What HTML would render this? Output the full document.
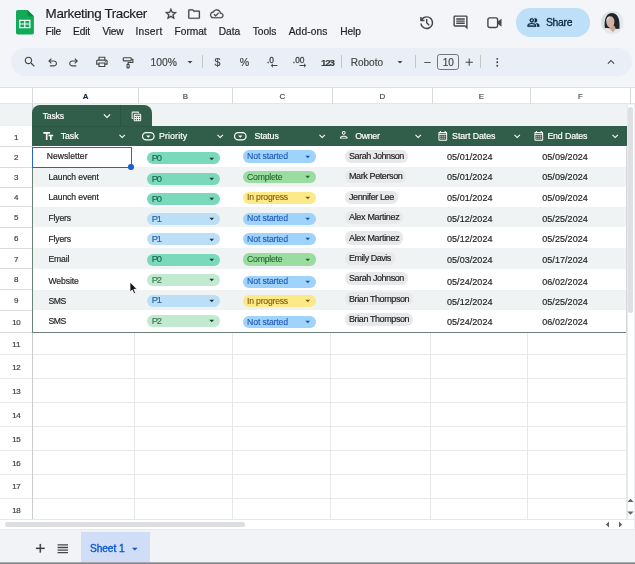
<!DOCTYPE html>
<html lang="en"><head><meta charset="utf-8"><title>Marketing Tracker</title>
<style>
html,body{margin:0;padding:0;}
body{width:635px;height:564px;position:relative;overflow:hidden;background:#f3f5f9;font-family:"Liberation Sans", sans-serif;-webkit-font-smoothing:antialiased;}
#w{position:absolute;left:0;top:0;width:635px;height:564px;transform:translateZ(0);will-change:transform;}
.b{position:absolute;}
.i{position:absolute;overflow:visible;}
.t{position:absolute;height:20px;line-height:20px;white-space:nowrap;-webkit-text-stroke:.18px currentColor;}
.chip{height:12.400px;line-height:12.400px;font-size:8.400px;color:#1f1f1f;background:#e3e5e7;border-radius:5px;padding:0 3.200px;}
</style></head><body><div id="w">
<div class="b" style="left:0px;top:0px;width:635px;height:564px;background:#f3f5f9;"></div>
<svg class="i" style="left:16.100px;top:10.100px;width:17.900px;height:24.500px" viewBox="0 0 17.9 24.5"><path d="M1.800 0h9.700L17.900 6.200V22.700a1.800 1.800 0 0 1-1.800 1.800H1.800A1.800 1.800 0 0 1 0 22.700V1.800A1.800 1.800 0 0 1 1.800 0z" fill="#12a957"/><path d="M11.500 0L17.900 6.200h-4.600a1.800 1.800 0 0 1-1.800-1.800z" fill="#0a8a40"/><path d="M3.100 9.800h11.400v8.500H3.100zM4.300 11v2.400h3.900V11zm5.100 0v2.400h3.900V11zM4.300 14.600v2.500h3.900v-2.500zm5.100 0v2.500h3.900v-2.500z" fill="#fff" fill-rule="evenodd"/></svg>
<span class="t" style="left:45.6px;top:4.10px;font-size:13.4px;color:#1f1f1f;font-weight:400;letter-spacing:-0.345px;">Marketing Tracker</span>
<svg class="i" style="left:164.40px;top:7.40px;width:13.8px;height:13.8px" viewBox="0 0 24 24" fill="#3c3f3e" stroke="#3c3f3e" stroke-width=".7"><path d="M22 9.24l-7.19-.62L12 2 9.19 8.63 2 9.24l5.46 4.73L5.82 21 12 17.27 18.18 21l-1.63-7.03L22 9.24zM12 15.4l-3.76 2.27 1-4.28-3.32-2.88 4.38-.38L12 6.1l1.71 4.04 4.38.38-3.32 2.88 1 4.28L12 15.4z"/></svg>
<svg class="i" style="left:186.90px;top:7.10px;width:14.2px;height:14.2px" viewBox="0 0 24 24" fill="#444746" stroke="#444746" stroke-width=".3"><path d="M9.17 6l2 2H20v10H4V6h5.17M10 4H4c-1.1 0-1.99.9-1.99 2L2 18c0 1.1.9 2 2 2h16c1.1 0 2-.9 2-2V8c0-1.1-.9-2-2-2h-8l-2-2z"/></svg>
<svg class="i" style="left:209.60px;top:7.20px;width:13.6px;height:13.6px" viewBox="0 0 24 24" fill="#444746" stroke="#444746" stroke-width=".3"><path d="M19.35 10.04C18.67 6.59 15.64 4 12 4 9.11 4 6.6 5.64 5.35 8.04 2.34 8.36 0 10.91 0 14c0 3.31 2.69 6 6 6h13c2.76 0 5-2.24 5-5 0-2.64-2.05-4.78-4.65-4.96zM19 18H6c-2.21 0-4-1.79-4-4 0-2.05 1.53-3.76 3.56-3.97l1.07-.11.5-.95C8.08 7.14 9.94 6 12 6c2.62 0 4.88 1.86 5.39 4.43l.3 1.5 1.53.11c1.56.1 2.78 1.41 2.78 2.96 0 1.65-1.35 3-3 3zm-9-3.820l-2.090-2.090L6.500 13.500 10 17l6.010-6.010-1.410-1.410z"/></svg>
<span class="t" style="left:45.6px;top:21.60px;font-size:10.2px;color:#1f1f1f;font-weight:400;letter-spacing:-0.255px;">File</span>
<span class="t" style="left:73px;top:21.60px;font-size:10.2px;color:#1f1f1f;font-weight:400;letter-spacing:-0.141px;">Edit</span>
<span class="t" style="left:102.5px;top:21.60px;font-size:10.2px;color:#1f1f1f;font-weight:400;letter-spacing:-0.252px;">View</span>
<span class="t" style="left:135.5px;top:21.60px;font-size:10.2px;color:#1f1f1f;font-weight:400;letter-spacing:0.253px;">Insert</span>
<span class="t" style="left:174.6px;top:21.60px;font-size:10.2px;color:#1f1f1f;font-weight:400;letter-spacing:-0.044px;">Format</span>
<span class="t" style="left:218.7px;top:21.60px;font-size:10.2px;color:#1f1f1f;font-weight:400;letter-spacing:-0.033px;">Data</span>
<span class="t" style="left:252.7px;top:21.60px;font-size:10.2px;color:#1f1f1f;font-weight:400;letter-spacing:-0.016px;">Tools</span>
<span class="t" style="left:288.7px;top:21.60px;font-size:10.2px;color:#1f1f1f;font-weight:400;letter-spacing:0.135px;">Add-ons</span>
<span class="t" style="left:340.2px;top:21.60px;font-size:10.2px;color:#1f1f1f;font-weight:400;letter-spacing:-0.088px;">Help</span>
<svg class="i" style="left:417.50px;top:13.90px;width:17.4px;height:17.4px" viewBox="0 -960 960 960" fill="#444746" ><path d="M480-120q-138 0-240.500-91.500T122-440h82q14 104 92.500 172T480-200q117 0 198.500-81.500T760-480q0-117-81.500-198.500T480-760q-69 0-129 32t-101 88h110v80H120v-240h80v94q51-64 124.500-99T480-840q75 0 140.500 28.500t114 77q48.500 48.500 77 114T840-480q0 75-28.500 140.500t-77 114q-48.500 48.500-114 77T480-120Zm112-192L440-464v-216h80v184l128 128-56 56Z"/></svg>
<svg class="i" style="left:451.70px;top:13.60px;width:17px;height:17px" viewBox="0 0 24 24" fill="#444746" ><path d="M21.990 4c0-1.100-.890-2-1.990-2H4c-1.100 0-2 .900-2 2v12c0 1.100.900 2 2 2h14l4 4-.010-18zM20 4v13.170L18.830 16H4V4h16zM6 12h12v2H6zm0-3h12v2H6zm0-3h12v2H6z"/></svg>
<svg class="i" style="left:486.800px;top:16.800px;width:15px;height:11.400px" viewBox="0 0 15 11.4"><rect x=".9" y=".9" width="9.700" height="9.600" rx="1.800" fill="none" stroke="#444746" stroke-width="1.400"/><path d="M10.800 4.600L14.500 1.700v8L10.800 6.800z" fill="#444746"/></svg>
<div class="b" style="left:516px;top:8.3px;width:73.6px;height:28.3px;background:#bde0f8;border-radius:14.150px;"></div>
<svg class="i" style="left:527.10px;top:16.20px;width:12.8px;height:12.8px" viewBox="0 0 24 24" fill="#0a2540" stroke="#0a2540" stroke-width=".5"><path d="M16.670 13.130C18.040 14.060 19 15.320 19 17v3h4v-3c0-2.180-3.570-3.470-6.330-3.870zM15 12c2.210 0 4-1.790 4-4s-1.790-4-4-4c-.47 0-.91.100-1.330.240C14.500 5.270 15 6.580 15 8s-.5 2.730-1.330 3.760c.42.140.86.240 1.330.240zM9 12c2.210 0 4-1.790 4-4S11.210 4 9 4 5 5.790 5 8s1.790 4 4 4zm0-6c1.100 0 2 .9 2 2s-.9 2-2 2-2-.9-2-2 .9-2 2-2zm0 7c-2.670 0-8 1.340-8 4v3h16v-3c0-2.660-5.330-4-8-4zm6 5H3v-.990C3.200 16.290 6.300 15 9 15s5.800 1.290 6 2v1z"/></svg>
<span class="t" style="left:546px;top:12.60px;font-size:10.4px;color:#0a2540;font-weight:400;letter-spacing:-0.307px;-webkit-text-stroke:.3px #0a2540;">Share</span>
<svg class="i" style="left:600.800px;top:11.200px;width:22.800px;height:22.800px" viewBox="0 0 40 40"><defs><clipPath id="av"><circle cx="20" cy="20" r="20"/></clipPath><linearGradient id="avg" x1="0" x2="1" y1="0" y2="0"><stop offset="0" stop-color="#cfe1db"/><stop offset=".55" stop-color="#dfe7ea"/><stop offset="1" stop-color="#e6ebf2"/></linearGradient></defs><g clip-path="url(#av)"><rect width="40" height="40" fill="url(#avg)"/><path d="M2 40C4 32 10 30 16 29.500L22 37 28 29.500C34 31 38 34 39 40z" fill="#e6e7e9"/><path d="M6.800 30C5 15 9 4 18.500 3.500 29 4 33.500 12 32.500 31L24 31.500 11 30z" fill="#1f2428"/><path d="M15 26h8.500l2.500 5-5 6.500-6-7z" fill="#c9a597"/><path d="M9.200 18C9 12 12 9 16 9 20.500 9 23.500 12.500 23.500 18.500 23.500 24 21 29 16.500 29 12.500 29 9.400 24 9.200 18z" fill="#d3b1a3"/><path d="M10 15c.5-3 2.800-5 5.500-5.200 .5 2.500-1.500 6-5.500 7.500z" fill="#e2d6d1"/></g></svg>
<div class="b" style="left:10.5px;top:47.9px;width:621px;height:27.8px;background:#e9eef7;border-radius:13.900px;"></div>
<svg class="i" style="left:23.10px;top:55.10px;width:13.8px;height:13.8px" viewBox="0 0 24 24" fill="#444746" ><path d="M15.5 14h-.79l-.28-.27C15.41 12.59 16 11.11 16 9.5 16 5.91 13.09 3 9.5 3S3 5.91 3 9.5 5.91 16 9.5 16c1.61 0 3.09-.59 4.23-1.57l.27.28v.79l5 4.99L20.49 19l-4.99-5zm-6 0C7.01 14 5 11.99 5 9.5S7.01 5 9.5 5 14 7.01 14 9.5 11.99 14 9.5 14z"/></svg>
<svg class="i" style="left:46.20px;top:55.70px;width:13.2px;height:13.2px" viewBox="0 0 24 24" fill="#444746" ><path d="M7 19v-2h7.1q1.575 0 2.737-1Q18 15 18 13.5T16.837 11Q15.675 10 14.1 10H7.8l2.6 2.6L9 14 4 9l5-5 1.4 1.4L7.8 8h6.3q2.425 0 4.163 1.575Q20 11.150 20 13.5q0 2.350-1.737 3.925Q16.525 19 14.100 19Z"/></svg>
<svg class="i" style="left:67.40px;top:55.70px;width:13.2px;height:13.2px" viewBox="0 0 24 24" fill="#444746" ><path d="M9.9 19q-2.425 0-4.162-1.575Q4 15.850 4 13.500q0-2.350 1.738-3.925Q7.475 8 9.900 8h6.300l-2.600-2.600L15 4l5 5-5 5-1.400-1.400 2.600-2.600H9.900q-1.575 0-2.737 1Q6 12 6 13.500T7.163 16q1.162 1 2.737 1H17v2Z"/></svg>
<svg class="i" style="left:94.60px;top:55.10px;width:13.8px;height:13.8px" viewBox="0 0 24 24" fill="#444746" ><path d="M19 8h-1V3H6v5H5c-1.66 0-3 1.34-3 3v6h4v4h12v-4h4v-6c0-1.66-1.34-3-3-3zM8 5h8v3H8V5zm8 12v2H8v-4h8v2zm2-2v-2H6v2H4v-4c0-.55.45-1 1-1h14c.55 0 1 .45 1 1v4h-2z"/><circle cx="18" cy="11.5" r="1"/></svg>
<svg class="i" style="left:120.80px;top:55.60px;width:13.6px;height:13.6px" viewBox="0 0 24 24" fill="#444746" ><g fill="none" stroke="#444746" stroke-width="2" stroke-linejoin="round"><rect x="4" y="3" width="14" height="5.500" rx="1.200"/><path d="M18 5.800h3v5.700h-8.500V14.500"/><rect x="10.700" y="14.800" width="3.600" height="6.200" rx=".8"/></g></svg>
<span class="t" style="left:150.4px;top:52.90px;font-size:10.3px;color:#444746;font-weight:400;letter-spacing:0.039px;">100%</span>
<svg class="i" style="left:183.70px;top:56.00px;width:12px;height:12px" viewBox="0 0 24 24" fill="#444746" ><path d="M7 10l5 5 5-5z"/></svg>
<div class="b" style="left:202px;top:55.4px;width:1px;height:13px;background:#c7c7c7;"></div>
<span class="t" style="left:117.4px;width:200px;text-align:center;top:52.20px;font-size:10.6px;color:#444746;font-weight:400;">$</span>
<span class="t" style="left:144.4px;width:200px;text-align:center;top:52.20px;font-size:10.6px;color:#444746;font-weight:400;">%</span>
<span class="t" style="left:170.5px;width:200px;text-align:center;top:49.80px;font-size:8.4px;color:#444746;font-weight:400;-webkit-text-stroke:.3px #444746;">.0</span>
<svg class="i" style="left:270px;top:63px;width:8px;height:5px" viewBox="0 0 8 5"><path d="M7.500 2.500H1.500M3 .8L1.200 2.500 3 4.200" stroke="#444746" stroke-width="1" fill="none"/></svg>
<span class="t" style="left:198.7px;width:200px;text-align:center;top:49.80px;font-size:8.4px;color:#444746;font-weight:400;-webkit-text-stroke:.3px #444746;">.00</span>
<svg class="i" style="left:299px;top:63px;width:8px;height:5px" viewBox="0 0 8 5"><path d="M.5 2.500H6.500M5 .8L6.800 2.500 5 4.200" stroke="#444746" stroke-width="1" fill="none"/></svg>
<span class="t" style="left:321.0px;top:52.60px;font-size:9.8px;color:#3c3f3e;font-weight:700;letter-spacing:-1.186px;">123</span>
<div class="b" style="left:341px;top:55.4px;width:1px;height:13px;background:#c7c7c7;"></div>
<span class="t" style="left:350.7px;top:52.90px;font-size:10.0px;color:#444746;font-weight:400;letter-spacing:0.008px;">Roboto</span>
<svg class="i" style="left:394.00px;top:56.00px;width:12px;height:12px" viewBox="0 0 24 24" fill="#444746" ><path d="M7 10l5 5 5-5z"/></svg>
<div class="b" style="left:415px;top:55.4px;width:1px;height:13px;background:#c7c7c7;"></div>
<svg class="i" style="left:421.50px;top:56.50px;width:11px;height:11px" viewBox="0 0 24 24" fill="#444746" ><path d="M5 11h14v2H5z"/></svg>
<div class="b" style="left:437.1px;top:53.7px;width:22.2px;height:16.3px;border:1px solid #747775;border-radius:2.800px;box-sizing:border-box;"></div>
<span class="t" style="left:348.2px;width:200px;text-align:center;top:52.80px;font-size:10.0px;color:#444746;font-weight:400;">10</span>
<svg class="i" style="left:463.20px;top:55.80px;width:12.4px;height:12.4px" viewBox="0 0 24 24" fill="#444746" ><path d="M19 13h-6v6h-2v-6H5v-2h6V5h2v6h6v2z"/></svg>
<div class="b" style="left:480.2px;top:55.4px;width:1px;height:13px;background:#c7c7c7;"></div>
<svg class="i" style="left:491.35px;top:55.75px;width:12.5px;height:12.5px" viewBox="0 0 24 24" fill="#444746" ><circle cx="12" cy="5.5" r="1.9"/><circle cx="12" cy="12" r="1.9"/><circle cx="12" cy="18.500" r="1.9"/></svg>
<svg class="i" style="left:604.00px;top:54.50px;width:14px;height:14px" viewBox="0 0 24 24" fill="#444746" ><path d="M12 8l-6 6 1.410 1.410L12 10.830l4.590 4.580L18 14z"/></svg>
<div class="b" style="left:0px;top:86.5px;width:635px;height:17.5px;background:#fff;border-top:1px solid #dee0e4;border-bottom:1px solid #e3e5ea;box-sizing:border-box;"></div>
<div class="b" style="left:32.3px;top:87.5px;width:1px;height:16px;background:#d7d9de;"></div>
<div class="b" style="left:138.2px;top:87.5px;width:1px;height:16px;background:#d7d9de;"></div>
<div class="b" style="left:232.0px;top:87.5px;width:1px;height:16px;background:#d7d9de;"></div>
<div class="b" style="left:332.2px;top:87.5px;width:1px;height:16px;background:#d7d9de;"></div>
<div class="b" style="left:432.0px;top:87.5px;width:1px;height:16px;background:#d7d9de;"></div>
<div class="b" style="left:530.3px;top:87.5px;width:1px;height:16px;background:#d7d9de;"></div>
<div class="b" style="left:629.8px;top:87.5px;width:1px;height:16px;background:#d7d9de;"></div>
<span class="t" style="left:-14.5px;width:200px;text-align:center;top:86.70px;font-size:7.9px;color:#1c2742;font-weight:700;">A</span>
<span class="t" style="left:85.4px;width:200px;text-align:center;top:86.70px;font-size:7.9px;color:#444746;font-weight:400;">B</span>
<span class="t" style="left:182.3px;width:200px;text-align:center;top:86.70px;font-size:7.9px;color:#444746;font-weight:400;">C</span>
<span class="t" style="left:282.4px;width:200px;text-align:center;top:86.70px;font-size:7.9px;color:#444746;font-weight:400;">D</span>
<span class="t" style="left:381.4px;width:200px;text-align:center;top:86.70px;font-size:7.9px;color:#444746;font-weight:400;">E</span>
<span class="t" style="left:480.4px;width:200px;text-align:center;top:86.70px;font-size:7.9px;color:#444746;font-weight:400;">F</span>
<div class="b" style="left:0px;top:104px;width:635px;height:22px;background:#f0f3f4;"></div>
<div class="b" style="left:0px;top:126px;width:627px;height:396px;background:#fff;"></div>
<div class="b" style="left:627px;top:104.5px;width:8px;height:425px;background:#fff;border-left:1px solid #e6e8eb;border-right:1px solid #eceef1;box-sizing:border-box;"></div>
<div class="b" style="left:628.1px;top:106.8px;width:5px;height:206.5px;background:#dfe0e3;border-radius:2.500px;"></div>
<div class="b" style="left:33px;top:167px;width:594px;height:20px;background:#eff3f4;"></div>
<div class="b" style="left:33px;top:206.7px;width:594px;height:20.30000000000001px;background:#eff3f4;"></div>
<div class="b" style="left:33px;top:248px;width:594px;height:20.600000000000023px;background:#eff3f4;"></div>
<div class="b" style="left:33px;top:289.7px;width:594px;height:20.30000000000001px;background:#eff3f4;"></div>
<div class="b" style="left:0px;top:353.9px;width:627px;height:1px;background:#e6e8eb;"></div>
<div class="b" style="left:0px;top:377.7px;width:627px;height:1px;background:#e6e8eb;"></div>
<div class="b" style="left:0px;top:401.7px;width:627px;height:1px;background:#e6e8eb;"></div>
<div class="b" style="left:0px;top:425.8px;width:627px;height:1px;background:#e6e8eb;"></div>
<div class="b" style="left:0px;top:449.7px;width:627px;height:1px;background:#e6e8eb;"></div>
<div class="b" style="left:0px;top:473.7px;width:627px;height:1px;background:#e6e8eb;"></div>
<div class="b" style="left:0px;top:497.5px;width:627px;height:1px;background:#e6e8eb;"></div>
<div class="b" style="left:0px;top:520.0px;width:627px;height:1px;background:#e6e8eb;"></div>
<div class="b" style="left:0px;top:146.2px;width:32px;height:1px;background:#d9dbde;"></div>
<div class="b" style="left:0px;top:166.5px;width:32px;height:1px;background:#d9dbde;"></div>
<div class="b" style="left:0px;top:186.5px;width:32px;height:1px;background:#d9dbde;"></div>
<div class="b" style="left:0px;top:206.2px;width:32px;height:1px;background:#d9dbde;"></div>
<div class="b" style="left:0px;top:226.5px;width:32px;height:1px;background:#d9dbde;"></div>
<div class="b" style="left:0px;top:247.5px;width:32px;height:1px;background:#d9dbde;"></div>
<div class="b" style="left:0px;top:268.1px;width:32px;height:1px;background:#d9dbde;"></div>
<div class="b" style="left:0px;top:289.2px;width:32px;height:1px;background:#d9dbde;"></div>
<div class="b" style="left:0px;top:309.5px;width:32px;height:1px;background:#d9dbde;"></div>
<div class="b" style="left:0px;top:331.9px;width:32px;height:1px;background:#d9dbde;"></div>
<div class="b" style="left:134.2px;top:333px;width:1px;height:188px;background:#e6e8eb;"></div>
<div class="b" style="left:231.6px;top:333px;width:1px;height:188px;background:#e6e8eb;"></div>
<div class="b" style="left:330px;top:333px;width:1px;height:188px;background:#e6e8eb;"></div>
<div class="b" style="left:429.8px;top:333px;width:1px;height:188px;background:#e6e8eb;"></div>
<div class="b" style="left:527px;top:333px;width:1px;height:188px;background:#e6e8eb;"></div>
<div class="b" style="left:626.4px;top:333px;width:1px;height:188px;background:#e6e8eb;"></div>
<div class="b" style="left:32.3px;top:104px;width:1px;height:418px;background:#c9ccd0;"></div>
<span class="t" style="left:-83.8px;width:200px;text-align:center;top:127.65px;font-size:8.0px;color:#3c4043;font-weight:400;">1</span>
<span class="t" style="left:-83.8px;width:200px;text-align:center;top:148.15px;font-size:8.0px;color:#3c4043;font-weight:400;">2</span>
<span class="t" style="left:-83.8px;width:200px;text-align:center;top:168.30px;font-size:8.0px;color:#3c4043;font-weight:400;">3</span>
<span class="t" style="left:-83.8px;width:200px;text-align:center;top:188.15px;font-size:8.0px;color:#3c4043;font-weight:400;">4</span>
<span class="t" style="left:-83.8px;width:200px;text-align:center;top:208.15px;font-size:8.0px;color:#3c4043;font-weight:400;">5</span>
<span class="t" style="left:-83.8px;width:200px;text-align:center;top:228.80px;font-size:8.0px;color:#3c4043;font-weight:400;">6</span>
<span class="t" style="left:-83.8px;width:200px;text-align:center;top:249.60px;font-size:8.0px;color:#3c4043;font-weight:400;">7</span>
<span class="t" style="left:-83.8px;width:200px;text-align:center;top:270.45px;font-size:8.0px;color:#3c4043;font-weight:400;">8</span>
<span class="t" style="left:-83.8px;width:200px;text-align:center;top:291.15px;font-size:8.0px;color:#3c4043;font-weight:400;">9</span>
<span class="t" style="left:-83.8px;width:200px;text-align:center;top:312.50px;font-size:8.0px;color:#3c4043;font-weight:400;letter-spacing:-0.503px;">10</span>
<span class="t" style="left:-83.8px;width:200px;text-align:center;top:334.70px;font-size:8.0px;color:#3c4043;font-weight:400;letter-spacing:-0.206px;">11</span>
<span class="t" style="left:-83.8px;width:200px;text-align:center;top:357.60px;font-size:8.0px;color:#3c4043;font-weight:400;letter-spacing:-0.503px;">12</span>
<span class="t" style="left:-83.8px;width:200px;text-align:center;top:381.50px;font-size:8.0px;color:#3c4043;font-weight:400;letter-spacing:-0.503px;">13</span>
<span class="t" style="left:-83.8px;width:200px;text-align:center;top:405.55px;font-size:8.0px;color:#3c4043;font-weight:400;letter-spacing:-0.503px;">14</span>
<span class="t" style="left:-83.8px;width:200px;text-align:center;top:429.55px;font-size:8.0px;color:#3c4043;font-weight:400;letter-spacing:-0.503px;">15</span>
<span class="t" style="left:-83.8px;width:200px;text-align:center;top:453.50px;font-size:8.0px;color:#3c4043;font-weight:400;letter-spacing:-0.503px;">16</span>
<span class="t" style="left:-83.8px;width:200px;text-align:center;top:477.40px;font-size:8.0px;color:#3c4043;font-weight:400;letter-spacing:-0.503px;">17</span>
<span class="t" style="left:-83.8px;width:200px;text-align:center;top:500.55px;font-size:8.0px;color:#3c4043;font-weight:400;letter-spacing:-0.503px;">18</span>
<div class="b" style="left:32.3px;top:104.6px;width:120px;height:22px;background:#315e4b;border-radius:8px 8px 0 0;"></div>
<div class="b" style="left:120px;top:104.6px;width:1px;height:21.4px;background:#2a5341;"></div>
<span class="t" style="left:42.7px;top:106.10px;font-size:8.6px;color:#fff;font-weight:400;letter-spacing:-0.174px;">Tasks</span>
<svg class="i" style="left:100.40px;top:108.80px;width:14px;height:14px" viewBox="0 0 24 24" fill="#fff" ><path d="M16.590 8.590L12 13.170 7.410 8.590 6 10l6 6 6-6z"/></svg>
<svg class="i" style="left:129.90px;top:109.50px;width:12.8px;height:12.8px" viewBox="0 0 24 24" fill="#e8f0ec" ><path d="M19 7H9c-1.100 0-2 .9-2 2v10c0 1.100.9 2 2 2h10c1.100 0 2-.9 2-2V9c0-1.100-.9-2-2-2zm0 2v2H9V9h10zm-6 6v-2h2v2h-2zm2 2v2h-2v-2h2zm-4-2H9v-2h2v2zm6-2h2v2h-2v-2zm-8 4h2v2H9v-2zm8 2v-2h2v2h-2zM6 17H5c-1.100 0-2-.9-2-2V5c0-1.100.9-2 2-2h10c1.100 0 2 .9 2 2v1h-2V5H5v10h1v2z"/></svg>
<div class="b" style="left:32.3px;top:125.7px;width:594.7px;height:20.3px;background:#315e4b;"></div>
<div class="b" style="left:32.3px;top:125.6px;width:120px;height:1px;background:#2c5644;"></div>
<svg class="i" style="left:42.25px;top:130.05px;width:12.5px;height:12.5px" viewBox="0 0 24 24" fill="#fff" color="#fff"><path d="M2.500 4v3h5v12h3V7h5V4h-13zm19 5h-9v3h3v7h3v-7h3V9z"/></svg>
<span class="t" style="left:60.7px;top:126.10px;font-size:8.8px;color:#fff;font-weight:400;letter-spacing:-0.073px;">Task</span>
<svg class="i" style="left:115.80px;top:129.50px;width:12.4px;height:12.4px" viewBox="0 0 24 24" fill="#fff" ><path d="M16.590 8.590L12 13.170 7.410 8.590 6 10l6 6 6-6z"/></svg>
<svg class="i" style="left:140.50px;top:128.80px;width:14.6px;height:14.6px" viewBox="0 0 24 24" fill="#fff" color="#fff"><rect x="2.5" y="6" width="19" height="12" rx="6" fill="none" stroke="currentColor" stroke-width="2"/><path d="M8.500 10.500l3.500 3.800 3.500-3.800z" fill="currentColor" stroke="none"/></svg>
<span class="t" style="left:159px;top:126.10px;font-size:8.8px;color:#fff;font-weight:400;letter-spacing:0.116px;">Priority</span>
<svg class="i" style="left:214.20px;top:129.50px;width:12.4px;height:12.4px" viewBox="0 0 24 24" fill="#fff" ><path d="M16.590 8.590L12 13.170 7.410 8.590 6 10l6 6 6-6z"/></svg>
<svg class="i" style="left:233.40px;top:128.80px;width:14.6px;height:14.6px" viewBox="0 0 24 24" fill="#fff" color="#fff"><rect x="2.5" y="6" width="19" height="12" rx="6" fill="none" stroke="currentColor" stroke-width="2"/><path d="M8.500 10.500l3.500 3.800 3.500-3.800z" fill="currentColor" stroke="none"/></svg>
<span class="t" style="left:254.4px;top:126.10px;font-size:8.8px;color:#fff;font-weight:400;letter-spacing:-0.109px;">Status</span>
<svg class="i" style="left:315.80px;top:129.50px;width:12.4px;height:12.4px" viewBox="0 0 24 24" fill="#fff" ><path d="M16.590 8.590L12 13.170 7.410 8.590 6 10l6 6 6-6z"/></svg>
<svg class="i" style="left:338.15px;top:129.45px;width:11.5px;height:11.5px" viewBox="0 0 24 24" fill="#fff" color="#fff"><path d="M12 6c1.100 0 2 .9 2 2s-.9 2-2 2-2-.9-2-2 .9-2 2-2m0 10c2.700 0 5.800 1.290 6 2H6c.23-.72 3.310-2 6-2m0-12C9.790 4 8 5.790 8 8s1.790 4 4 4 4-1.790 4-4-1.790-4-4-4zm0 10c-2.670 0-8 1.340-8 4v2h16v-2c0-2.660-5.330-4-8-4z"/></svg>
<span class="t" style="left:355.3px;top:126.10px;font-size:8.8px;color:#fff;font-weight:400;letter-spacing:-0.344px;">Owner</span>
<svg class="i" style="left:411.80px;top:129.50px;width:12.4px;height:12.4px" viewBox="0 0 24 24" fill="#fff" ><path d="M16.590 8.590L12 13.170 7.410 8.590 6 10l6 6 6-6z"/></svg>
<svg class="i" style="left:436.50px;top:129.80px;width:11.6px;height:11.6px" viewBox="0 0 24 24" fill="#fff" color="#fff"><path d="M19 4h-1V2h-2v2H8V2H6v2H5c-1.110 0-1.990.9-1.990 2L3 20c0 1.100.89 2 2 2h14c1.100 0 2-.9 2-2V6c0-1.100-.9-2-2-2zm0 16H5V10h14v10zM5 8V6h14v2H5zm4 6H7v-2h2v2zm4 0h-2v-2h2v2zm4 0h-2v-2h2v2zm-8 4H7v-2h2v2zm4 0h-2v-2h2v2zm4 0h-2v-2h2v2z"/></svg>
<span class="t" style="left:452.1px;top:126.10px;font-size:8.8px;color:#fff;font-weight:400;letter-spacing:-0.065px;">Start Dates</span>
<svg class="i" style="left:510.80px;top:129.50px;width:12.4px;height:12.4px" viewBox="0 0 24 24" fill="#fff" ><path d="M16.590 8.590L12 13.170 7.410 8.590 6 10l6 6 6-6z"/></svg>
<svg class="i" style="left:532.90px;top:129.80px;width:11.6px;height:11.6px" viewBox="0 0 24 24" fill="#fff" color="#fff"><path d="M19 4h-1V2h-2v2H8V2H6v2H5c-1.110 0-1.990.9-1.990 2L3 20c0 1.100.89 2 2 2h14c1.100 0 2-.9 2-2V6c0-1.100-.9-2-2-2zm0 16H5V10h14v10zM5 8V6h14v2H5zm4 6H7v-2h2v2zm4 0h-2v-2h2v2zm4 0h-2v-2h2v2zm-8 4H7v-2h2v2zm4 0h-2v-2h2v2zm4 0h-2v-2h2v2z"/></svg>
<span class="t" style="left:547.4px;top:126.10px;font-size:8.8px;color:#fff;font-weight:400;letter-spacing:-0.142px;">End Dates</span>
<svg class="i" style="left:609.30px;top:129.50px;width:12.4px;height:12.4px" viewBox="0 0 24 24" fill="#fff" ><path d="M16.590 8.590L12 13.170 7.410 8.590 6 10l6 6 6-6z"/></svg>
<div class="b" style="left:147.4px;top:152.2px;width:73px;height:12.0px;background:#7ad9bb;border-radius:6px;"></div>
<span class="t" style="left:151.7px;top:148.00px;font-size:9.3px;color:#1c6850;font-weight:400;letter-spacing:-1.188px;">P0</span>
<svg class="i" style="left:205.65px;top:152.55px;width:11.5px;height:11.5px" viewBox="0 0 24 24" fill="#1f3a30" ><path d="M7 10l5 5 5-5z"/></svg>
<div class="b" style="left:242.9px;top:150.4px;width:73px;height:12.2px;background:#a0d3fc;border-radius:6.100px;"></div>
<span class="t" style="left:247.1px;top:146.20px;font-size:8.7px;color:#1a55b0;font-weight:400;letter-spacing:-0.145px;-webkit-text-stroke:.08px currentColor;">Not started</span>
<svg class="i" style="left:301.55px;top:150.85px;width:11.5px;height:11.5px" viewBox="0 0 24 24" fill="#1a55b0" ><path d="M7 10l5 5 5-5z"/></svg>
<div class="b" style="left:345.2px;top:149.9px;width:62.699999999999996px;height:13.2px;background:#e8e9eb;border-radius:6px;"></div>
<span class="t" style="left:349.0px;top:146.20px;font-size:9.0px;color:#1f1f1f;font-weight:400;letter-spacing:-0.434px;">Sarah Johnson</span>
<span class="t" style="left:447.0px;top:146.60px;font-size:9.0px;color:#1f1f1f;font-weight:400;letter-spacing:0.045px;">05/01/2024</span>
<span class="t" style="left:542.2px;top:146.60px;font-size:9.0px;color:#1f1f1f;font-weight:400;letter-spacing:0.065px;">05/09/2024</span>
<span class="t" style="left:48.4px;top:167.40px;font-size:8.6px;color:#1f1f1f;font-weight:400;letter-spacing:-0.101px;">Launch event</span>
<div class="b" style="left:147.4px;top:172.7px;width:73px;height:12.0px;background:#7ad9bb;border-radius:6px;"></div>
<span class="t" style="left:151.7px;top:168.50px;font-size:9.3px;color:#1c6850;font-weight:400;letter-spacing:-1.188px;">P0</span>
<svg class="i" style="left:205.65px;top:173.05px;width:11.5px;height:11.5px" viewBox="0 0 24 24" fill="#1f3a30" ><path d="M7 10l5 5 5-5z"/></svg>
<div class="b" style="left:242.9px;top:170.70000000000002px;width:73px;height:12.2px;background:#9bdda0;border-radius:6.100px;"></div>
<span class="t" style="left:247.1px;top:166.50px;font-size:8.7px;color:#1f6429;font-weight:400;letter-spacing:-0.248px;-webkit-text-stroke:.08px currentColor;">Complete</span>
<svg class="i" style="left:301.55px;top:171.15px;width:11.5px;height:11.5px" viewBox="0 0 24 24" fill="#1f6429" ><path d="M7 10l5 5 5-5z"/></svg>
<div class="b" style="left:345.2px;top:170.10000000000002px;width:61.199999999999996px;height:13.2px;background:#e8e9eb;border-radius:6px;"></div>
<span class="t" style="left:349.0px;top:166.40px;font-size:9.0px;color:#1f1f1f;font-weight:400;letter-spacing:-0.395px;">Mark Peterson</span>
<span class="t" style="left:447.0px;top:167.40px;font-size:9.0px;color:#1f1f1f;font-weight:400;letter-spacing:0.045px;">05/01/2024</span>
<span class="t" style="left:542.2px;top:167.40px;font-size:9.0px;color:#1f1f1f;font-weight:400;letter-spacing:0.065px;">05/09/2024</span>
<span class="t" style="left:48.4px;top:187.10px;font-size:8.6px;color:#1f1f1f;font-weight:400;letter-spacing:-0.101px;">Launch event</span>
<div class="b" style="left:147.4px;top:193.0px;width:73px;height:12.0px;background:#7ad9bb;border-radius:6px;"></div>
<span class="t" style="left:151.7px;top:188.80px;font-size:9.3px;color:#1c6850;font-weight:400;letter-spacing:-1.188px;">P0</span>
<svg class="i" style="left:205.65px;top:193.35px;width:11.5px;height:11.5px" viewBox="0 0 24 24" fill="#1f3a30" ><path d="M7 10l5 5 5-5z"/></svg>
<div class="b" style="left:242.9px;top:191.5px;width:73px;height:12.2px;background:#fce98a;border-radius:6.100px;"></div>
<span class="t" style="left:247.1px;top:187.30px;font-size:8.7px;color:#835600;font-weight:400;letter-spacing:-0.234px;-webkit-text-stroke:.08px currentColor;">In progress</span>
<svg class="i" style="left:301.55px;top:191.95px;width:11.5px;height:11.5px" viewBox="0 0 24 24" fill="#835600" ><path d="M7 10l5 5 5-5z"/></svg>
<div class="b" style="left:345.2px;top:190.70000000000002px;width:52.599999999999994px;height:13.2px;background:#e8e9eb;border-radius:6px;"></div>
<span class="t" style="left:349.0px;top:187.00px;font-size:9.0px;color:#1f1f1f;font-weight:400;letter-spacing:-0.396px;">Jennifer Lee</span>
<span class="t" style="left:447.0px;top:188.20px;font-size:9.0px;color:#1f1f1f;font-weight:400;letter-spacing:0.045px;">05/01/2024</span>
<span class="t" style="left:542.2px;top:188.20px;font-size:9.0px;color:#1f1f1f;font-weight:400;letter-spacing:0.065px;">05/09/2024</span>
<span class="t" style="left:48.4px;top:208.20px;font-size:8.6px;color:#1f1f1f;font-weight:400;letter-spacing:-0.134px;">Flyers</span>
<div class="b" style="left:147.4px;top:212.9px;width:73px;height:12.0px;background:#bbdff7;border-radius:6px;"></div>
<span class="t" style="left:151.7px;top:208.70px;font-size:9.3px;color:#2d62a6;font-weight:400;letter-spacing:-1.188px;">P1</span>
<svg class="i" style="left:205.65px;top:213.25px;width:11.5px;height:11.5px" viewBox="0 0 24 24" fill="#1f3a30" ><path d="M7 10l5 5 5-5z"/></svg>
<div class="b" style="left:242.9px;top:212.5px;width:73px;height:12.2px;background:#a0d3fc;border-radius:6.100px;"></div>
<span class="t" style="left:247.1px;top:208.30px;font-size:8.7px;color:#1a55b0;font-weight:400;letter-spacing:-0.145px;-webkit-text-stroke:.08px currentColor;">Not started</span>
<svg class="i" style="left:301.55px;top:212.95px;width:11.5px;height:11.5px" viewBox="0 0 24 24" fill="#1a55b0" ><path d="M7 10l5 5 5-5z"/></svg>
<div class="b" style="left:345.2px;top:211.0px;width:58.199999999999996px;height:13.2px;background:#e8e9eb;border-radius:6px;"></div>
<span class="t" style="left:349.0px;top:207.30px;font-size:9.0px;color:#1f1f1f;font-weight:400;letter-spacing:-0.318px;">Alex Martinez</span>
<span class="t" style="left:447.0px;top:208.60px;font-size:9.0px;color:#1f1f1f;font-weight:400;letter-spacing:0.045px;">05/12/2024</span>
<span class="t" style="left:542.2px;top:208.60px;font-size:9.0px;color:#1f1f1f;font-weight:400;letter-spacing:0.065px;">05/25/2024</span>
<span class="t" style="left:48.4px;top:228.60px;font-size:8.6px;color:#1f1f1f;font-weight:400;letter-spacing:-0.134px;">Flyers</span>
<div class="b" style="left:147.4px;top:233.4px;width:73px;height:12.0px;background:#bbdff7;border-radius:6px;"></div>
<span class="t" style="left:151.7px;top:229.20px;font-size:9.3px;color:#2d62a6;font-weight:400;letter-spacing:-1.188px;">P1</span>
<svg class="i" style="left:205.65px;top:233.75px;width:11.5px;height:11.5px" viewBox="0 0 24 24" fill="#1f3a30" ><path d="M7 10l5 5 5-5z"/></svg>
<div class="b" style="left:242.9px;top:232.9px;width:73px;height:12.2px;background:#a0d3fc;border-radius:6.100px;"></div>
<span class="t" style="left:247.1px;top:228.70px;font-size:8.7px;color:#1a55b0;font-weight:400;letter-spacing:-0.145px;-webkit-text-stroke:.08px currentColor;">Not started</span>
<svg class="i" style="left:301.55px;top:233.35px;width:11.5px;height:11.5px" viewBox="0 0 24 24" fill="#1a55b0" ><path d="M7 10l5 5 5-5z"/></svg>
<div class="b" style="left:345.2px;top:231.4px;width:58.199999999999996px;height:13.2px;background:#e8e9eb;border-radius:6px;"></div>
<span class="t" style="left:349.0px;top:227.70px;font-size:9.0px;color:#1f1f1f;font-weight:400;letter-spacing:-0.318px;">Alex Martinez</span>
<span class="t" style="left:447.0px;top:229.40px;font-size:9.0px;color:#1f1f1f;font-weight:400;letter-spacing:0.045px;">05/12/2024</span>
<span class="t" style="left:542.2px;top:229.40px;font-size:9.0px;color:#1f1f1f;font-weight:400;letter-spacing:0.065px;">05/25/2024</span>
<span class="t" style="left:48.4px;top:249.20px;font-size:8.6px;color:#1f1f1f;font-weight:400;letter-spacing:-0.14px;">Email</span>
<div class="b" style="left:147.4px;top:253.5px;width:73px;height:12.0px;background:#7ad9bb;border-radius:6px;"></div>
<span class="t" style="left:151.7px;top:249.30px;font-size:9.3px;color:#1c6850;font-weight:400;letter-spacing:-1.188px;">P0</span>
<svg class="i" style="left:205.65px;top:253.85px;width:11.5px;height:11.5px" viewBox="0 0 24 24" fill="#1f3a30" ><path d="M7 10l5 5 5-5z"/></svg>
<div class="b" style="left:242.9px;top:253.4px;width:73px;height:12.2px;background:#9bdda0;border-radius:6.100px;"></div>
<span class="t" style="left:247.1px;top:249.20px;font-size:8.7px;color:#1f6429;font-weight:400;letter-spacing:-0.248px;-webkit-text-stroke:.08px currentColor;">Complete</span>
<svg class="i" style="left:301.55px;top:253.85px;width:11.5px;height:11.5px" viewBox="0 0 24 24" fill="#1f6429" ><path d="M7 10l5 5 5-5z"/></svg>
<div class="b" style="left:345.2px;top:251.60000000000002px;width:49.699999999999996px;height:13.2px;background:#e8e9eb;border-radius:6px;"></div>
<span class="t" style="left:349.0px;top:247.90px;font-size:9.0px;color:#1f1f1f;font-weight:400;letter-spacing:-0.465px;">Emily Davis</span>
<span class="t" style="left:447.0px;top:249.80px;font-size:9.0px;color:#1f1f1f;font-weight:400;letter-spacing:0.045px;">05/03/2024</span>
<span class="t" style="left:542.2px;top:249.80px;font-size:9.0px;color:#1f1f1f;font-weight:400;letter-spacing:0.065px;">05/17/2024</span>
<span class="t" style="left:48.4px;top:271.20px;font-size:8.6px;color:#1f1f1f;font-weight:400;letter-spacing:-0.07px;">Website</span>
<div class="b" style="left:147.4px;top:274.0px;width:73px;height:12.0px;background:#c1ead0;border-radius:6px;"></div>
<span class="t" style="left:151.7px;top:269.80px;font-size:9.3px;color:#3d7a52;font-weight:400;letter-spacing:-1.188px;">P2</span>
<svg class="i" style="left:205.65px;top:274.35px;width:11.5px;height:11.5px" viewBox="0 0 24 24" fill="#1f3a30" ><path d="M7 10l5 5 5-5z"/></svg>
<div class="b" style="left:242.9px;top:275.59999999999997px;width:73px;height:12.2px;background:#a0d3fc;border-radius:6.100px;"></div>
<span class="t" style="left:247.1px;top:271.40px;font-size:8.7px;color:#1a55b0;font-weight:400;letter-spacing:-0.145px;-webkit-text-stroke:.08px currentColor;">Not started</span>
<svg class="i" style="left:301.55px;top:276.05px;width:11.5px;height:11.5px" viewBox="0 0 24 24" fill="#1a55b0" ><path d="M7 10l5 5 5-5z"/></svg>
<div class="b" style="left:345.2px;top:271.7px;width:62.699999999999996px;height:13.2px;background:#e8e9eb;border-radius:6px;"></div>
<span class="t" style="left:349.0px;top:268.00px;font-size:9.0px;color:#1f1f1f;font-weight:400;letter-spacing:-0.434px;">Sarah Johnson</span>
<span class="t" style="left:447.0px;top:271.50px;font-size:9.0px;color:#1f1f1f;font-weight:400;letter-spacing:0.045px;">05/24/2024</span>
<span class="t" style="left:542.2px;top:271.50px;font-size:9.0px;color:#1f1f1f;font-weight:400;letter-spacing:0.065px;">06/02/2024</span>
<span class="t" style="left:48.4px;top:290.70px;font-size:8.6px;color:#1f1f1f;font-weight:400;letter-spacing:-0.375px;">SMS</span>
<div class="b" style="left:147.4px;top:294.5px;width:73px;height:12.0px;background:#bbdff7;border-radius:6px;"></div>
<span class="t" style="left:151.7px;top:290.30px;font-size:9.3px;color:#2d62a6;font-weight:400;letter-spacing:-1.188px;">P1</span>
<svg class="i" style="left:205.65px;top:294.85px;width:11.5px;height:11.5px" viewBox="0 0 24 24" fill="#1f3a30" ><path d="M7 10l5 5 5-5z"/></svg>
<div class="b" style="left:242.9px;top:295.0px;width:73px;height:12.2px;background:#fce98a;border-radius:6.100px;"></div>
<span class="t" style="left:247.1px;top:290.80px;font-size:8.7px;color:#835600;font-weight:400;letter-spacing:-0.234px;-webkit-text-stroke:.08px currentColor;">In progress</span>
<svg class="i" style="left:301.55px;top:295.45px;width:11.5px;height:11.5px" viewBox="0 0 24 24" fill="#835600" ><path d="M7 10l5 5 5-5z"/></svg>
<div class="b" style="left:345.2px;top:292.2px;width:68.0px;height:13.2px;background:#e8e9eb;border-radius:6px;"></div>
<span class="t" style="left:349.0px;top:288.50px;font-size:9.0px;color:#1f1f1f;font-weight:400;letter-spacing:-0.405px;">Brian Thompson</span>
<span class="t" style="left:447.0px;top:291.60px;font-size:9.0px;color:#1f1f1f;font-weight:400;letter-spacing:0.045px;">05/12/2024</span>
<span class="t" style="left:542.2px;top:291.60px;font-size:9.0px;color:#1f1f1f;font-weight:400;letter-spacing:0.065px;">05/25/2024</span>
<span class="t" style="left:48.4px;top:311.30px;font-size:8.6px;color:#1f1f1f;font-weight:400;letter-spacing:-0.375px;">SMS</span>
<div class="b" style="left:147.4px;top:315.0px;width:73px;height:12.0px;background:#c1ead0;border-radius:6px;"></div>
<span class="t" style="left:151.7px;top:310.80px;font-size:9.3px;color:#3d7a52;font-weight:400;letter-spacing:-1.188px;">P2</span>
<svg class="i" style="left:205.65px;top:315.35px;width:11.5px;height:11.5px" viewBox="0 0 24 24" fill="#1f3a30" ><path d="M7 10l5 5 5-5z"/></svg>
<div class="b" style="left:242.9px;top:315.79999999999995px;width:73px;height:12.2px;background:#a0d3fc;border-radius:6.100px;"></div>
<span class="t" style="left:247.1px;top:311.60px;font-size:8.7px;color:#1a55b0;font-weight:400;letter-spacing:-0.145px;-webkit-text-stroke:.08px currentColor;">Not started</span>
<svg class="i" style="left:301.55px;top:316.25px;width:11.5px;height:11.5px" viewBox="0 0 24 24" fill="#1a55b0" ><path d="M7 10l5 5 5-5z"/></svg>
<div class="b" style="left:345.2px;top:312.7px;width:68.0px;height:13.2px;background:#e8e9eb;border-radius:6px;"></div>
<span class="t" style="left:349.0px;top:309.00px;font-size:9.0px;color:#1f1f1f;font-weight:400;letter-spacing:-0.405px;">Brian Thompson</span>
<span class="t" style="left:447.0px;top:312.40px;font-size:9.0px;color:#1f1f1f;font-weight:400;letter-spacing:0.045px;">05/24/2024</span>
<span class="t" style="left:542.2px;top:312.40px;font-size:9.0px;color:#1f1f1f;font-weight:400;letter-spacing:0.065px;">06/02/2024</span>
<div class="b" style="left:32.3px;top:146.7px;width:1px;height:186px;background:#6b8377;"></div>
<div class="b" style="left:32.3px;top:331.5px;width:594.7px;height:1px;background:#6b8377;"></div>
<div class="b" style="left:626.4px;top:146.7px;width:1px;height:186px;background:#d5d9dc;"></div>
<div class="b" style="left:32.1px;top:146.5px;width:100.0px;height:21.1px;border:1.600px solid #2465cf;box-sizing:border-box;background:#fff;"></div>
<span class="t" style="left:46.8px;top:146.20px;font-size:8.6px;color:#1f1f1f;font-weight:400;letter-spacing:0.011px;">Newsletter</span>
<div class="b" style="left:128.4px;top:164.1px;width:5.6px;height:5.6px;background:#1b5fd0;border-radius:50%;"></div>
<svg class="i" style="left:128.500px;top:281px;width:9px;height:14px" viewBox="0 0 9 14"><path d="M1 1v10l2.300-2.100 1.700 3.800 1.600-.7-1.700-3.700H8z" fill="#111" stroke="#fff" stroke-width=".8"/></svg>
<div class="b" style="left:0px;top:519.2px;width:634px;height:10px;background:#fff;border-top:1px solid #e6e8eb;box-sizing:border-box;"></div>
<div class="b" style="left:5px;top:521.5px;width:239.5px;height:5.6px;background:#dddee1;border-radius:2.800px;"></div>
<svg class="i" style="left:604px;top:521px;width:20px;height:7px" viewBox="0 0 20 7"><path d="M5 .4v6.200L1.800 3.500zM15 .4v6.200L18.200 3.500z" fill="#5f6368"/></svg>
<svg class="i" style="left:627px;top:496px;width:7px;height:22px" viewBox="0 0 7 22"><path d="M.4 6h6.200L3.500 2.800zM.4 15.500h6.200L3.500 18.700z" fill="#5f6368"/></svg>
<div class="b" style="left:0px;top:529px;width:635px;height:35px;background:#f1f3f7;border-top:1px solid #e6e8ec;box-sizing:border-box;"></div>
<div class="b" style="left:80.8px;top:532px;width:69.4px;height:32px;background:#cfdef6;"></div>
<svg class="i" style="left:33.00px;top:540.70px;width:14.6px;height:14.6px" viewBox="0 0 24 24" fill="#3c3f3e" stroke="#3c3f3e" stroke-width=".4"><path d="M19 13h-6v6h-2v-6H5v-2h6V5h2v6h6v2z"/></svg>
<svg class="i" style="left:54.90px;top:540.50px;width:15.6px;height:15.6px" viewBox="0 0 24 24" fill="#444746" ><path d="M4 5h16v2H4zm0 4h16v2H4zm0 4h16v2H4zm0 4h16v2H4z"/></svg>
<span class="t" style="left:90px;top:538.60px;font-size:10.2px;color:#0b57d0;font-weight:400;letter-spacing:-0.089px;-webkit-text-stroke:.35px #0b57d0;">Sheet 1</span>
<svg class="i" style="left:128.00px;top:541.60px;width:13.6px;height:13.6px" viewBox="0 0 24 24" fill="#0b57d0" ><path d="M7 10l5 5 5-5z"/></svg>
<div class="b" style="left:0px;top:562px;width:635px;height:2px;background:linear-gradient(#b9bbbe,#74777a);"></div>
</div></body></html>
